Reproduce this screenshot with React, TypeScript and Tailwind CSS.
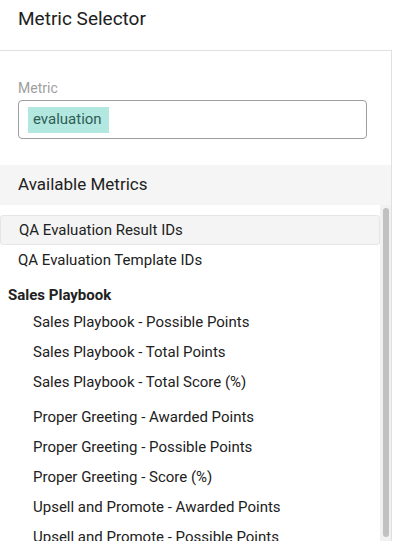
type Row = { label: string; indent?: boolean; active?: boolean; gap?: boolean };

const topRows: Row[] = [
  { label: "QA Evaluation Result IDs", active: true },
  { label: "QA Evaluation Template IDs" },
];

const playbookRows: Row[] = [
  { label: "Sales Playbook - Possible Points" },
  { label: "Sales Playbook - Total Points" },
  { label: "Sales Playbook - Total Score (%)" },
  { label: "Proper Greeting - Awarded Points", gap: true },
  { label: "Proper Greeting - Possible Points" },
  { label: "Proper Greeting - Score (%)" },
  { label: "Upsell and Promote - Awarded Points" },
  { label: "Upsell and Promote - Possible Points" },
];

function MetricRow({ label, indent, active, gap }: Row) {
  return (
    <div
      className={`h-[30px] shrink-0 flex items-center text-[15px] text-[#212121] whitespace-nowrap ${
        indent ? "pl-[33px]" : "pl-[18px]"
      } ${gap ? "mt-[5px]" : ""} ${
        active ? "bg-[#f4f4f4] border border-[#e6e6e6] rounded-[3px] pl-[17px]" : ""
      }`}
    >
      {label}
    </div>
  );
}

export default function App() {
  return (
    <div
      className="w-[394px] h-[541px] bg-white overflow-hidden flex flex-col"
      style={{ fontFamily: "Roboto, 'Noto Sans', sans-serif" }}
    >
      <div className="h-[51px] shrink-0 w-[392px] border-b border-[#e0e0e0] px-[18px] pt-[7px] text-[19px] leading-[24px] text-[#212121]">
        Metric Selector
      </div>

      <div className="flex-1 min-h-0 w-[392px] border-r border-[#e0e0e0] flex flex-col">
        <div className="px-[18px] pt-[29px] pb-[26px] shrink-0">
          <div className="text-[14px] leading-[16px] text-[#9e9e9e] mb-[4px]">Metric</div>
          <div className="w-[349px] h-[39px] border border-[#9e9e9e] rounded-[4px] flex items-center pl-[9px]">
            <span className="h-[26px] flex items-center pl-[5px] pr-[7px] bg-[#b3e8e0] text-[15px] text-[#2e5c55]">
              evaluation
            </span>
          </div>
        </div>

        <div className="h-[40px] shrink-0 bg-[#f5f5f5] flex items-center px-[18px] text-[17px] text-[#212121]">
          Available Metrics
        </div>

        <div className="flex-1 min-h-0 flex">
          <div className="flex-1 min-w-0 flex flex-col pt-[10px] overflow-hidden">
            {topRows.map((r) => (
              <MetricRow key={r.label} {...r} />
            ))}
            <div className="h-[24px] mt-[8px] shrink-0 flex items-center pl-[8px] text-[15px] font-bold text-[#212121]">
              Sales Playbook
            </div>
            {playbookRows.map((r) => (
              <MetricRow key={r.label} {...r} indent />
            ))}
          </div>
          <div className="w-[11px] shrink-0 bg-[#f1f1f1] pt-[3px] pb-[4px] pl-[3px] pr-[2px]">
            <div className="h-full w-[6px] rounded-full bg-[#c1c1c1]" />
          </div>
        </div>
      </div>
    </div>
  );
}
